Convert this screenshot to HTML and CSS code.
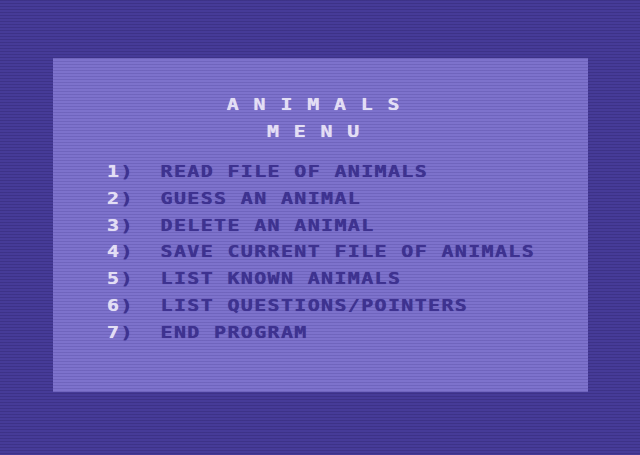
FILE: index.html
```html
<!DOCTYPE html>
<html>
<head>
<meta charset="utf-8">
<link rel="stylesheet" href="styles.css">
</head>
<body>
<div class="screen">
  <div class="line title t1">A N I M A L S</div>
  <div class="line title t2">M E N U</div>
  <div class="menu">
    <div class="line item"><span class="num">1</span>)  READ FILE OF ANIMALS</div>
    <div class="line item"><span class="num">2</span>)  GUESS AN ANIMAL</div>
    <div class="line item"><span class="num">3</span>)  DELETE AN ANIMAL</div>
    <div class="line item"><span class="num">4</span>)  SAVE CURRENT FILE OF ANIMALS</div>
    <div class="line item"><span class="num">5</span>)  LIST KNOWN ANIMALS</div>
    <div class="line item"><span class="num">6</span>)  LIST QUESTIONS/POINTERS</div>
    <div class="line item"><span class="num">7</span>)  END PROGRAM</div>
  </div>
</div>
</body>
</html>
```
FILE: styles.css
```css
html, body {
  margin: 0;
  padding: 0;
}
body {
  width: 640px;
  height: 455px;
  box-sizing: border-box;
  padding: 58px 52px 63px 53px;
  background:
    repeating-linear-gradient(to bottom, rgba(20, 10, 60, 0.18) 0 1px, rgba(0,0,0,0) 1px 3px),
    #463b98;
  overflow: hidden;
}
.screen {
  width: 535px;
  height: 334px;
  box-sizing: border-box;
  padding-top: 40.125px;
  background:
    repeating-linear-gradient(to bottom, rgba(40, 30, 110, 0.16) 0 1px, rgba(0,0,0,0) 1px 3px),
    #7d72cc;
  font-family: "DejaVu Sans Mono", "Liberation Mono", monospace;
  font-weight: bold;
  font-size: 16px;
  letter-spacing: 1.07px;
  color: #3e3290;
  overflow: hidden;
}
.line {
  height: 13.375px;
  line-height: 13.375px;
  white-space: pre;
  transform: scaleX(1.25);
  transform-origin: 0 0;
  text-shadow: 0 0 0.6px currentColor;
}
.title {
  color: #e2def4;
}
.t1 {
  padding-left: 139.1px;
  margin-bottom: 13.375px;
}
.t2 {
  padding-left: 171.2px;
}
.menu {
  margin-top: 26.75px;
  padding-left: 53.5px;
  display: flex;
  flex-direction: column;
  gap: 13.375px;
}
.num {
  color: #e2def4;
}
```
